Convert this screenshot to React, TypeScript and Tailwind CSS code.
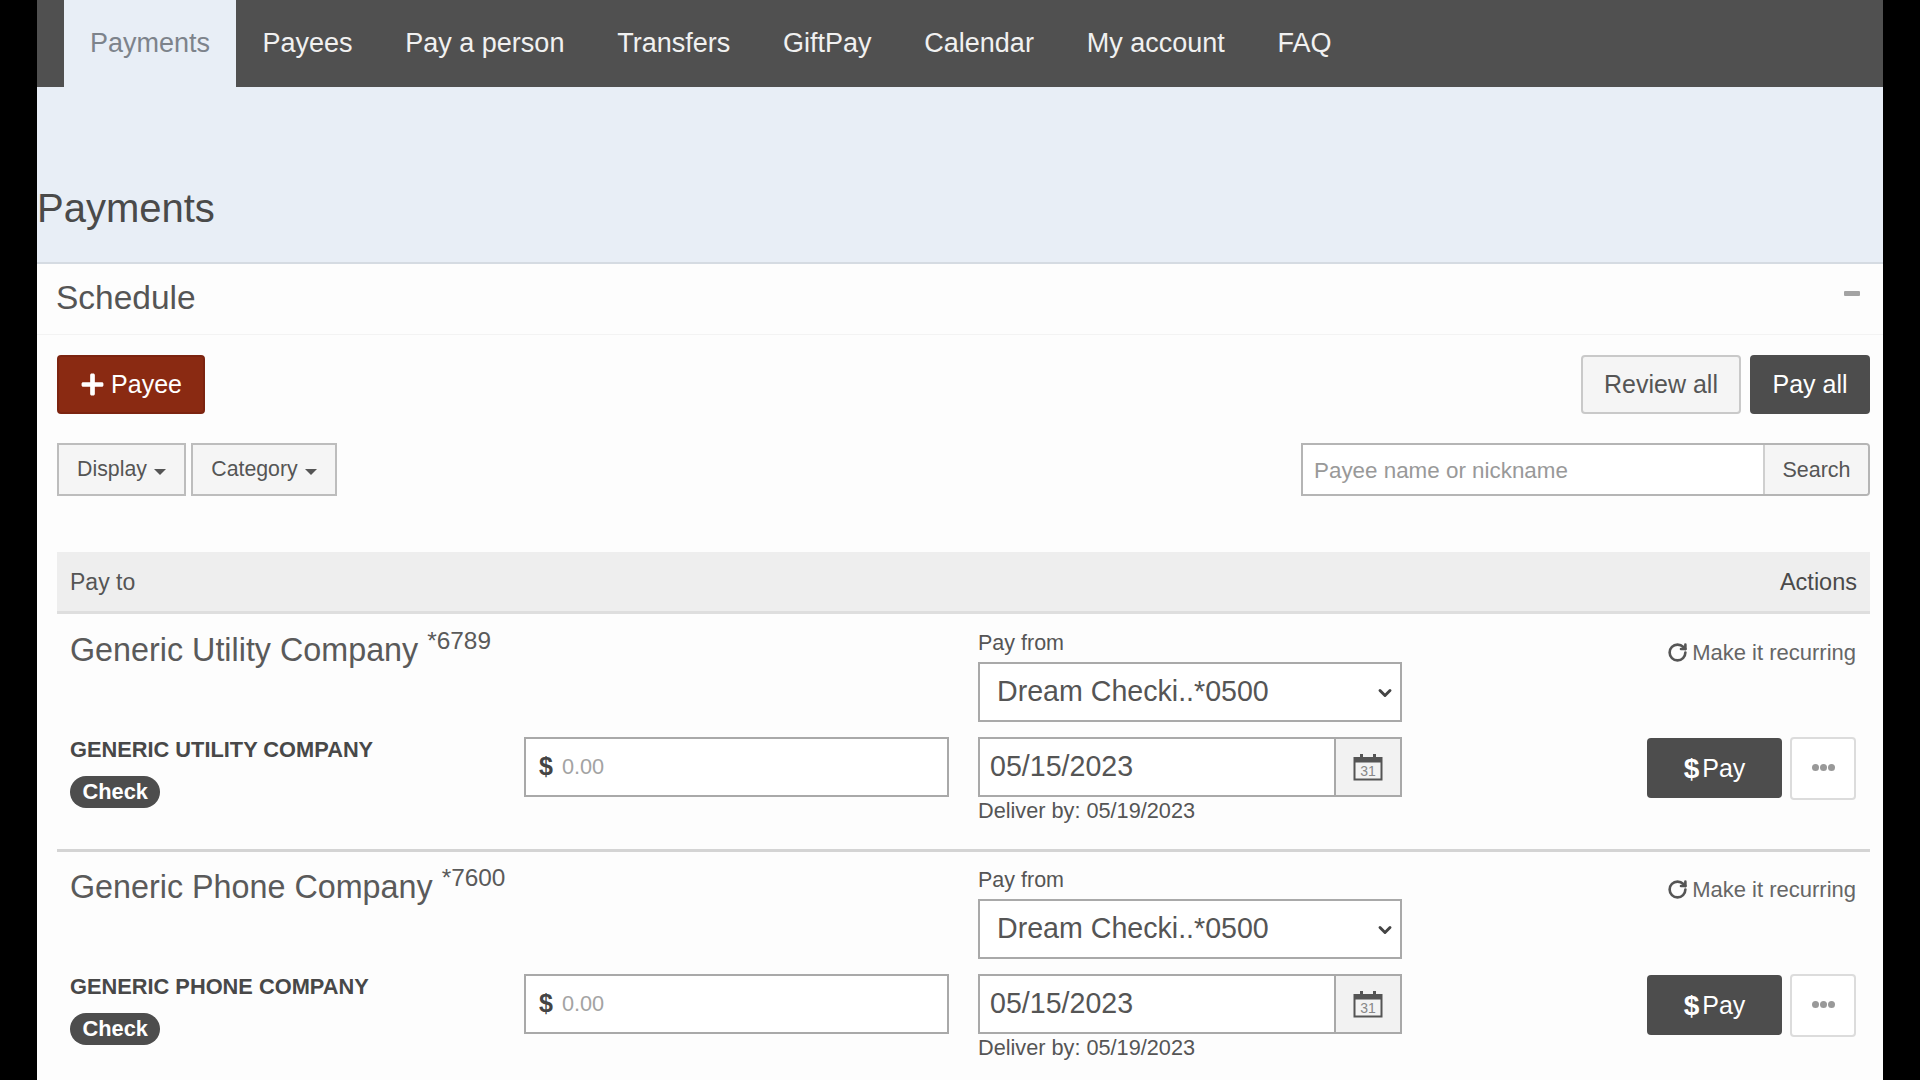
import { FaPlus } from 'react-icons/fa';
import { ChevronDown, RotateCw } from 'lucide-react';

const navItems = ['Payees', 'Pay a person', 'Transfers', 'GiftPay', 'Calendar', 'My account', 'FAQ'];

const payees = [
  { name: 'Generic Utility Company', label: 'GENERIC UTILITY COMPANY', acct: '*6789' },
  { name: 'Generic Phone Company', label: 'GENERIC PHONE COMPANY', acct: '*7600' },
];

const CalendarIcon = () => (
  <svg width="30" height="28" viewBox="0 0 30 28" fill="none">
    <rect x="1.5" y="5" width="27" height="21.5" stroke="#555" strokeWidth="2" fill="#f3f3f3" />
    <rect x="1.5" y="5" width="27" height="4.5" fill="#555" />
    <rect x="7" y="1" width="3" height="7" fill="#555" />
    <rect x="20" y="1" width="3" height="7" fill="#555" />
    <text x="15" y="23" textAnchor="middle" fontSize="14" fill="#888" fontFamily="'Liberation Sans', sans-serif">
      31
    </text>
  </svg>
);

const PayeeRow = ({ name, label, acct }: { name: string; label: string; acct: string }) => (
  <div className="mr-[13px] ml-[20px] border-b-[3px] border-[#d4d4d4] pt-[15px] pr-[14px] pb-[25px] pl-[13px]">
    <div className="grid grid-cols-[454px_454px_424px_1fr]">
      <div className="col-span-2 flex items-start">
        <span className="text-[32.3px] leading-[40px] text-[#5a5a5a]">{name}</span>
        <span className="ml-[9px] -mt-[3px] text-[24.4px] leading-[28px] text-[#5a5a5a]">{acct}</span>
      </div>
      <div>
        <div className="text-[21.5px] leading-[26px] text-[#555]">Pay from</div>
        <div className="relative mt-[6px]">
          <select
            defaultValue="0500"
            className="block h-[60px] w-full appearance-none border-2 border-[#a9a9a9] bg-white pb-[2px] pl-[17px] text-[28.6px] text-[#555]"
          >
            <option value="0500">Dream Checki..*0500</option>
          </select>
          <ChevronDown size={20} strokeWidth={3.5} className="pointer-events-none absolute top-[21px] right-[7px] text-[#444]" />
        </div>
      </div>
      <div className="flex justify-end">
        <a className="mt-[9px] flex h-[26px] items-center gap-[4px] text-[22px] text-[#666]">
          <RotateCw size={21} strokeWidth={3} className="text-[#555]" />
          Make it recurring
        </a>
      </div>

      <div className="mt-[15px]">
        <div className="text-[21.8px] leading-[26px] font-bold text-[#484848]">{label}</div>
        <span className="mt-[13px] inline-block h-[32px] rounded-full bg-[#4d4d4d] px-[12.5px] text-[21.8px] leading-[31px] font-bold text-white">
          Check
        </span>
      </div>
      <div className="mt-[15px]">
        <div className="flex h-[60px] w-[425px] items-center border-2 border-[#a9a9a9] bg-white pl-[13px]">
          <span className="text-[25px] font-bold text-[#444]">$</span>
          <input
            placeholder="0.00"
            className="ml-[9px] w-full text-[21.7px] text-[#555] outline-none placeholder:text-[#a3a3a3]"
          />
        </div>
      </div>
      <div className="mt-[15px]">
        <div className="flex h-[60px] border-2 border-[#a9a9a9]">
          <input
            readOnly
            value="05/15/2023"
            className="w-full min-w-0 bg-white pb-[2px] pl-[10px] text-[28.6px] text-[#555] outline-none"
          />
          <span className="flex w-[66px] shrink-0 items-center justify-center border-l-2 border-[#a9a9a9] bg-[#f2f2f2]">
            <CalendarIcon />
          </span>
        </div>
        <div className="mt-[1px] text-[21.7px] leading-[26px] text-[#555]">Deliver by: 05/19/2023</div>
      </div>
      <div className="mt-[15px] flex items-start justify-end gap-[8px]">
        <button className="mt-[1px] flex h-[60px] w-[135px] items-center justify-center gap-[3px] rounded-[4px] bg-[#4d4d4d] pt-[2px] text-[25px] text-white">
          <span className="text-[28px] leading-none font-bold">$</span>Pay
        </button>
        <button className="flex h-[63px] w-[66px] items-center justify-center gap-[1px] rounded-[4px] border-2 border-[#dcdcdc] bg-white pb-[2px]">
          <span className="h-[7px] w-[7px] rounded-full bg-[#999]" />
          <span className="h-[7px] w-[7px] rounded-full bg-[#999]" />
          <span className="h-[7px] w-[7px] rounded-full bg-[#999]" />
        </button>
      </div>
    </div>
  </div>
);

export default function App() {
  return (
    <div className="h-screen overflow-hidden bg-black px-[37px] font-['Liberation_Sans',Arial,sans-serif]">
      <div className="h-full bg-[#fdfdfd]">
        <nav className="flex h-[87px] bg-[#505050] pl-[27px] text-[27px] text-[#f1f1f1]">
          <a className="flex items-center bg-[#e8eef6] px-[26px] text-[#7d838b]">Payments</a>
          {navItems.map(item => (
            <a key={item} className="flex items-center px-[26.4px]">
              {item}
            </a>
          ))}
        </nav>

        <div className="flex h-[177px] items-end border-b-2 border-[#d5dbe2] bg-[#e8eef6] pb-[29px]">
          <h1 className="text-[40px] leading-[50px] text-[#4a4a4a]">Payments</h1>
        </div>

        <div className="flex h-[71px] items-center justify-between border-b border-[#f3f3f3] pr-[23px] pl-[19px]">
          <h2 className="mb-[1px] text-[33.5px] text-[#555]">Schedule</h2>
          <span className="mb-[12px] h-[5px] w-[16px] rounded-[1px] bg-[#a3a3a3]" />
        </div>

        <div className="flex justify-between pt-[20px] pr-[13px] pl-[20px]">
          <button className="flex h-[59px] w-[148px] items-center justify-center gap-[6px] rounded-[4px] border-2 border-[#7c2410] bg-[#8a2a12] text-[25px] text-white">
            <FaPlus size={25} />
            Payee
          </button>
          <div className="flex gap-[9px]">
            <button className="h-[59px] w-[160px] rounded-[4px] border-2 border-[#c9c9c9] bg-[#f5f5f5] text-[25px] text-[#555]">
              Review all
            </button>
            <button className="h-[59px] w-[120px] rounded-[4px] bg-[#4d4d4d] text-[25px] text-white">Pay all</button>
          </div>
        </div>

        <div className="mt-[29px] flex justify-between pr-[13px] pl-[20px]">
          <div className="flex gap-[5px]">
            <button className="flex h-[53px] w-[129px] items-center justify-center gap-[7px] border-2 border-[#bdbdbd] bg-[#f5f5f5] pt-[1px] text-[21.3px] text-[#555]">
              Display
              <span className="mt-[3px] border-x-[6px] border-t-[6px] border-x-transparent border-t-[#555]" />
            </button>
            <button className="flex h-[53px] w-[146px] items-center justify-center gap-[7px] border-2 border-[#bdbdbd] bg-[#f5f5f5] pt-[1px] text-[21.3px] text-[#555]">
              Category
              <span className="mt-[3px] border-x-[6px] border-t-[6px] border-x-transparent border-t-[#555]" />
            </button>
          </div>
          <div className="flex h-[53px] w-[569px] rounded-r-[4px] border-2 border-[#b5b5b5]">
            <input
              placeholder="Payee name or nickname"
              className="w-full min-w-0 bg-white pt-[3px] pl-[11px] text-[22.4px] outline-none placeholder:text-[#999]"
            />
            <button className="w-[105px] shrink-0 rounded-r-[3px] border-l-2 border-[#cfcfcf] bg-[#f5f5f5] pt-[2px] text-[21.5px] text-[#555]">
              Search
            </button>
          </div>
        </div>

        <div className="mt-[56px] mr-[13px] mb-[1px] ml-[20px] flex h-[62px] items-center justify-between border-b-[3px] border-[#dedede] bg-[#eeeeee] px-[13px] pt-[2px] text-[23px] text-[#555]">
          <span>Pay to</span>
          <span className="text-[23.5px] text-[#4a4a4a]">Actions</span>
        </div>

        {payees.map(p => (
          <PayeeRow key={p.acct} {...p} />
        ))}
      </div>
    </div>
  );
}
